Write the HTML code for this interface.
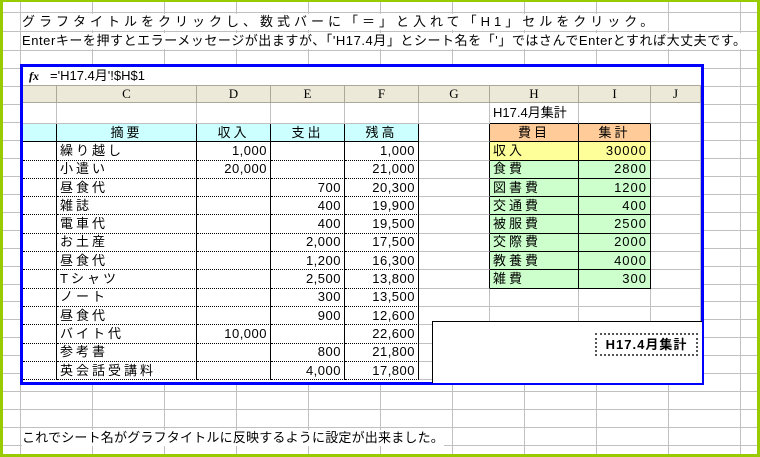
<!DOCTYPE html>
<html><head><meta charset="utf-8"><style>
*{margin:0;padding:0;box-sizing:border-box}
html,body{width:760px;height:457px;overflow:hidden;background:#fff}
body{position:relative;font-family:"Liberation Sans","Noto Sans CJK JP",sans-serif;color:#000}
#frame{position:absolute;left:0;top:0;width:760px;height:457px;border:3px solid #99cc00;border-top-width:2px}
.t{position:absolute;font-size:13px;line-height:16px;white-space:nowrap;background:#fff}
#chart{position:absolute;left:20px;top:64px;width:684px;height:321px;border:3px solid #0000ff;background:#fff;overflow:hidden}
#fb{position:absolute;left:0;top:0;width:678px;height:19px;border-bottom:1px solid #aca899;font-size:13px;line-height:18px}
table{position:absolute;left:0;top:19px;border-collapse:separate;border-spacing:0;table-layout:fixed;font-family:"Liberation Sans","Noto Sans CJK JP",sans-serif;font-size:13px}
td{border-right:1px solid #c0c0c0;border-bottom:1px solid #c0c0c0;padding:0 3px;overflow:hidden;white-space:nowrap;height:18.3px;line-height:16px;letter-spacing:3px}
tr.h td{background:#ece9d8;border-color:#aca899;text-align:center;font-family:"Liberation Serif",serif;height:17px;letter-spacing:0}
tr.b td{height:21px}
.bk{border-right:1px solid #000}
.dt{border-bottom:1px dotted #000}
.sb{border-bottom:1px solid #000}
.cy{background:#ccffff;text-align:center}
.r{text-align:right;letter-spacing:0.5px;padding-right:3px}
.or{background:#ffcc99;text-align:center;border-right:1px solid #000;border-bottom:1px solid #000}
.ye{background:#ffff99;border-right:1px solid #000;border-bottom:1px solid #000}
.gr{background:#ccffcc;border-right:1px solid #000;border-bottom:1px solid #000}
.gl{border-right:1px solid #000}
.n{letter-spacing:1px}
#box{position:absolute;left:432px;top:321px;width:270px;height:62px;background:#fff;border-left:1px solid #000;border-top:1px solid #000}
#ttl{position:absolute;left:595px;top:333px;width:103px;height:23px;border:2px dotted #555;font-weight:bold;font-size:13px;line-height:19px;text-align:center;letter-spacing:1px;background:#fff}
</style></head><body>
<svg width="760" height="457" style="position:absolute;left:0;top:0">
<g stroke="#c0c0c0" stroke-width="1">
<line x1="0" y1="12.5" x2="760" y2="12.5"/><line x1="0" y1="31.5" x2="760" y2="31.5"/><line x1="0" y1="50.5" x2="760" y2="50.5"/>
<line x1="0" y1="391.5" x2="760" y2="391.5"/><line x1="0" y1="409.5" x2="760" y2="409.5"/><line x1="0" y1="427.5" x2="760" y2="427.5"/><line x1="0" y1="445.5" x2="760" y2="445.5"/>
<line x1="0" y1="68.5" x2="760" y2="68.5"/>
<line x1="0" y1="86.5" x2="760" y2="86.5"/><line x1="0" y1="104.5" x2="760" y2="104.5"/><line x1="0" y1="122.5" x2="760" y2="122.5"/><line x1="0" y1="140.5" x2="760" y2="140.5"/><line x1="0" y1="158.5" x2="760" y2="158.5"/><line x1="0" y1="176.5" x2="760" y2="176.5"/><line x1="0" y1="194.5" x2="760" y2="194.5"/><line x1="0" y1="212.5" x2="760" y2="212.5"/><line x1="0" y1="230.5" x2="760" y2="230.5"/><line x1="0" y1="248.5" x2="760" y2="248.5"/><line x1="0" y1="266.5" x2="760" y2="266.5"/><line x1="0" y1="284.5" x2="760" y2="284.5"/><line x1="0" y1="301.5" x2="760" y2="301.5"/><line x1="0" y1="319.5" x2="760" y2="319.5"/><line x1="0" y1="337.5" x2="760" y2="337.5"/><line x1="0" y1="355.5" x2="760" y2="355.5"/><line x1="0" y1="373.5" x2="760" y2="373.5"/>
<line x1="20.5" y1="0" x2="20.5" y2="457"/><line x1="92.5" y1="0" x2="92.5" y2="457"/><line x1="164.5" y1="0" x2="164.5" y2="457"/><line x1="236.5" y1="0" x2="236.5" y2="457"/><line x1="308.5" y1="0" x2="308.5" y2="457"/><line x1="380.5" y1="0" x2="380.5" y2="457"/><line x1="452.5" y1="0" x2="452.5" y2="457"/><line x1="524.5" y1="0" x2="524.5" y2="457"/><line x1="596.5" y1="0" x2="596.5" y2="457"/><line x1="668.5" y1="0" x2="668.5" y2="457"/><line x1="740.5" y1="0" x2="740.5" y2="457"/>
</g></svg>
<div class="t" style="left:22px;top:14px;letter-spacing:4px">グラフタイトルをクリックし、数式バーに「＝」と入れて「H1」セルをクリック。</div>
<div class="t" style="left:22px;top:33px;letter-spacing:0.55px">Enterキーを押すとエラーメッセージが出ますが、「'H17.4月」とシート名を「'」ではさんでEnterとすれば大丈夫です。</div>
<div class="t" style="left:22px;top:430px;letter-spacing:0.2px">これでシート名がグラフタイトルに反映するように設定が出来ました。</div>

<div id="chart">
<div id="fb"><span style="position:absolute;left:6px;top:0;font-family:'Liberation Serif',serif;font-style:italic;font-weight:bold;font-size:12px">fx</span><span style="position:absolute;left:27px;top:0">='H17.4月'!$H$1</span></div>
<table style="width:678px">
<colgroup><col style="width:34px"><col style="width:140px"><col style="width:74px"><col style="width:74px"><col style="width:74px"><col style="width:71px"><col style="width:89px"><col style="width:72px"><col style="width:50px"></colgroup>
<tr class="h"><td></td><td>C</td><td>D</td><td>E</td><td>F</td><td>G</td><td>H</td><td>I</td><td>J</td></tr>
<tr class="b"><td></td><td></td><td></td><td></td><td></td><td></td><td class="sb" style="letter-spacing:0">H17.4月集計</td><td class="sb"></td><td></td></tr>
<tr><td class="cy bk sb"></td><td class="cy bk sb">摘要</td><td class="cy bk sb">収入</td><td class="cy bk sb">支出</td><td class="cy bk sb">残高</td><td class="gl"></td><td class="or">費目</td><td class="or">集計</td><td></td></tr>
<tr><td class="bk dt"></td><td class="bk dt">繰り越し</td><td class="bk dt r">1,000</td><td class="bk dt r"></td><td class="bk dt r">1,000</td><td class="gl"></td><td class="ye">収入</td><td class="ye r n">30000</td><td></td></tr>
<tr><td class="bk dt"></td><td class="bk dt">小遣い</td><td class="bk dt r">20,000</td><td class="bk dt r"></td><td class="bk dt r">21,000</td><td class="gl"></td><td class="gr">食費</td><td class="gr r n">2800</td><td></td></tr>
<tr><td class="bk dt"></td><td class="bk dt">昼食代</td><td class="bk dt r"></td><td class="bk dt r">700</td><td class="bk dt r">20,300</td><td class="gl"></td><td class="gr">図書費</td><td class="gr r n">1200</td><td></td></tr>
<tr><td class="bk dt"></td><td class="bk dt">雑誌</td><td class="bk dt r"></td><td class="bk dt r">400</td><td class="bk dt r">19,900</td><td class="gl"></td><td class="gr">交通費</td><td class="gr r n">400</td><td></td></tr>
<tr><td class="bk dt"></td><td class="bk dt">電車代</td><td class="bk dt r"></td><td class="bk dt r">400</td><td class="bk dt r">19,500</td><td class="gl"></td><td class="gr">被服費</td><td class="gr r n">2500</td><td></td></tr>
<tr><td class="bk dt"></td><td class="bk dt">お土産</td><td class="bk dt r"></td><td class="bk dt r">2,000</td><td class="bk dt r">17,500</td><td class="gl"></td><td class="gr">交際費</td><td class="gr r n">2000</td><td></td></tr>
<tr><td class="bk dt"></td><td class="bk dt">昼食代</td><td class="bk dt r"></td><td class="bk dt r">1,200</td><td class="bk dt r">16,300</td><td class="gl"></td><td class="gr">教養費</td><td class="gr r n">4000</td><td></td></tr>
<tr><td class="bk dt"></td><td class="bk dt">Tシャツ</td><td class="bk dt r"></td><td class="bk dt r">2,500</td><td class="bk dt r">13,800</td><td class="gl"></td><td class="gr">雑費</td><td class="gr r n">300</td><td></td></tr>
<tr><td class="bk dt"></td><td class="bk dt">ノート</td><td class="bk dt r"></td><td class="bk dt r">300</td><td class="bk dt r">13,500</td><td></td><td></td><td></td><td></td></tr>
<tr><td class="bk dt"></td><td class="bk dt">昼食代</td><td class="bk dt r"></td><td class="bk dt r">900</td><td class="bk dt r">12,600</td><td></td><td></td><td></td><td></td></tr>
<tr><td class="bk dt"></td><td class="bk dt">バイト代</td><td class="bk dt r">10,000</td><td class="bk dt r"></td><td class="bk dt r">22,600</td><td></td><td></td><td></td><td></td></tr>
<tr><td class="bk dt"></td><td class="bk dt">参考書</td><td class="bk dt r"></td><td class="bk dt r">800</td><td class="bk dt r">21,800</td><td></td><td></td><td></td><td></td></tr>
<tr><td class="bk dt"></td><td class="bk dt">英会話受講料</td><td class="bk dt r"></td><td class="bk dt r">4,000</td><td class="bk dt r">17,800</td><td></td><td></td><td></td><td></td></tr>
</table>
</div>
<div id="box"></div>
<div id="ttl">H17.4月集計</div>
<div id="frame"></div>
</body></html>
